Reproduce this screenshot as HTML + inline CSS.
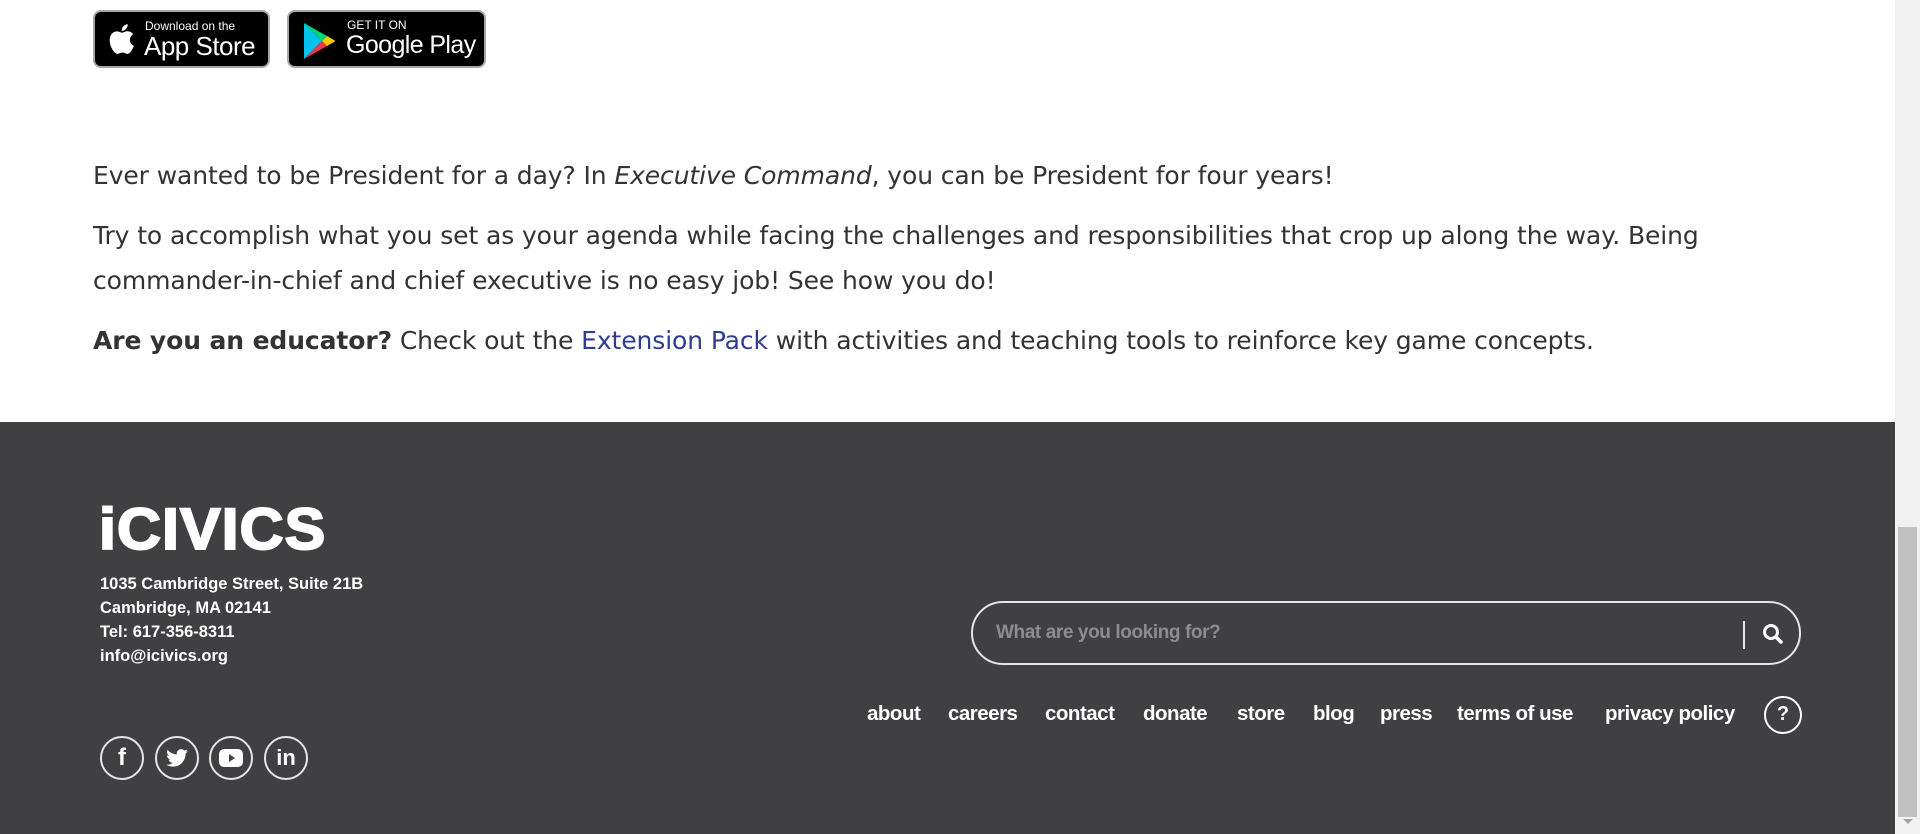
<!DOCTYPE html>
<html><head><meta charset="utf-8"><style>
*{margin:0;padding:0;box-sizing:border-box}
body{width:1920px;height:834px;overflow:hidden;background:#fff;position:relative;font-family:"DejaVu Sans","Liberation Sans",sans-serif}
.badge{position:absolute;top:10px;height:58px;background:#000;border:2px solid #a6a6a6;border-radius:8px;color:#fff;font-family:"Liberation Sans",sans-serif}
.txt{position:absolute;left:93px;width:1690px;color:#333;font-size:25px;line-height:45px;letter-spacing:-0.1px}
.txt p{margin-bottom:15px}
footer{position:absolute;left:0;top:422px;width:1895px;height:412px;background:#404042;color:#fff}
.addr{position:absolute;left:100px;top:572px;font:bold 16.5px/24px "Liberation Sans",sans-serif;color:#fff}
.soc{position:absolute;top:736px;width:44px;height:44px;border:2.5px solid #e6e6e6;border-radius:50%;display:flex;align-items:center;justify-content:center;color:#fff;font:bold 24px "Liberation Sans",sans-serif}
.search{position:absolute;left:971px;top:601px;width:830px;height:64px;border:2.5px solid #e6e6e6;border-radius:32px}
.nav{position:absolute;top:700px;font:bold 20.5px/28px "Liberation Sans",sans-serif;color:#fff;letter-spacing:-0.5px}
.sb{position:absolute;right:0;top:0;width:25px;height:834px;background:#f1f1f1}
</style></head><body>
<div class="badge" style="left:93px;width:177px">
<svg style="position:absolute;left:12px;top:10px" width="28" height="34" viewBox="0 0 24 29"><path fill="#fff" d="M19.6 15.4c0-3.3 2.7-4.9 2.8-5-1.5-2.2-3.9-2.5-4.7-2.5-2-.2-3.9 1.2-4.9 1.2s-2.6-1.2-4.2-1.1C6.400 8 4.400 9.200 3.400 11.100c-2.300 3.900-.6 9.700 1.600 12.900 1.100 1.600 2.400 3.300 4 3.200 1.600-.1 2.200-1 4.200-1s2.500 1 4.200 1c1.700 0 2.800-1.600 3.900-3.200 1.200-1.800 1.700-3.500 1.700-3.600 0 0-3.300-1.300-3.400-5zM16.400 5.800c.9-1.100 1.500-2.600 1.300-4.100-1.300.1-2.800.9-3.700 1.900-.8.900-1.500 2.400-1.300 3.900 1.400.1 2.800-.7 3.700-1.700z"/></svg>
<div style="position:absolute;left:50px;top:7px;font-size:12px">Download on the</div>
<div style="position:absolute;left:49px;top:19px;font-size:26px;letter-spacing:-0.5px">App Store</div>
</div>
<div class="badge" style="left:287px;width:199px">
<svg style="position:absolute;left:13px;top:10px" width="34" height="38" viewBox="0 0 34 38"><path d="M2 1l18 18L2 37z" fill="#00c3f0"/><path d="M2 1l23 13-5 5z" fill="#00d66f"/><path d="M2 37l23-13-5-5z" fill="#f0364a"/><path d="M25 14l7 4c1.500 1 1.500 1 0 2l-7 4-5-5z" fill="#ffc900"/></svg>
<div style="position:absolute;left:58px;top:6px;font-size:12px">GET IT ON</div>
<div style="position:absolute;left:57px;top:19px;font-size:25px;letter-spacing:-0.6px">Google Play</div>
</div>
<div class="txt" style="top:153px">
<p>Ever wanted to be President for a day? In <i>Executive Command</i>, you can be President for four years!</p>
<p>Try to accomplish what you set as your agenda while facing the challenges and responsibilities that crop up along the way. Being commander-in-chief and chief executive is no easy job! See how you do!</p>
<p><b>Are you an educator?</b> Check out the <span style="color:#2e3d8f">Extension Pack</span> with activities and teaching tools to reinforce key game concepts.</p>
</div>
<footer></footer>
<div style="position:absolute;left:99px;top:497px;font:900 58px/66px 'Liberation Sans',sans-serif;color:#fff;letter-spacing:1px;-webkit-text-stroke:2px #fff;transform:scaleX(1.05);transform-origin:left">iCIVICS</div>
<div class="addr">1035 Cambridge Street, Suite 21B<br>Cambridge, MA 02141<br>Tel: 617-356-8311<br>info@icivics.org</div>
<div class="soc" style="left:100px">f</div>
<div class="soc" style="left:155px"><svg width="22" height="18" viewBox="0 0 24 20"><path fill="#fff" d="M24 2.400c-.9.4-1.800.6-2.800.8 1-.6 1.800-1.600 2.200-2.700-1 .6-2 1-3.100 1.200C19.300.7 18 .1 16.600.1c-2.700 0-4.900 2.200-4.900 4.900 0 .4 0 .8.1 1.100C7.700 5.900 4.100 4 1.700 1 1.200 1.700 1 2.600 1 3.500c0 1.700.9 3.200 2.200 4.100-.8 0-1.600-.2-2.200-.6v.1c0 2.400 1.700 4.400 3.900 4.800-.4.100-.8.200-1.300.2-.3 0-.6 0-.9-.1.6 2 2.400 3.400 4.600 3.400-1.700 1.300-3.800 2.100-6.100 2.100-.4 0-.8 0-1.200-.1 2.200 1.400 4.800 2.200 7.500 2.200 9.100 0 14-7.500 14-14v-.6c1-.7 1.800-1.600 2.500-2.600z"/></svg></div>
<div class="soc" style="left:209px"><svg width="24" height="18" viewBox="0 0 24 18"><rect width="24" height="18" rx="5" fill="#fff"/><path d="M10 5l6 4-6 4z" fill="#404042"/></svg></div>
<div class="soc" style="left:264px;font-size:22px">in</div>
<div class="search">
<div style="position:absolute;left:23px;top:16px;font:bold 19px/28px 'Liberation Sans',sans-serif;color:#8d8d8f;letter-spacing:-0.4px">What are you looking for?</div>
<div style="position:absolute;left:770px;top:18px;width:2px;height:28px;background:#e6e6e6"></div>
<svg style="position:absolute;left:788px;top:19px" width="24" height="24" viewBox="0 0 24 24"><circle cx="10" cy="10" r="6.5" stroke="#fff" stroke-width="3" fill="none"/><path d="M15 15l5 5" stroke="#fff" stroke-width="3.500" stroke-linecap="round"/></svg>
</div>
<div class="nav" style="left:867px">about</div>
<div class="nav" style="left:948px">careers</div>
<div class="nav" style="left:1045px">contact</div>
<div class="nav" style="left:1143px">donate</div>
<div class="nav" style="left:1237px">store</div>
<div class="nav" style="left:1313px">blog</div>
<div class="nav" style="left:1380px">press</div>
<div class="nav" style="left:1457px">terms of use</div>
<div class="nav" style="left:1605px">privacy policy</div>
<div style="position:absolute;left:1764px;top:696px;width:38px;height:38px;border:2.5px solid #fff;border-radius:50%;color:#fff;font:bold 20px/33px 'Liberation Sans',sans-serif;text-align:center">?</div>
<div class="sb"><div style="position:absolute;left:3px;top:527px;width:19px;height:290px;background:#c1c1c1"></div>
<div style="position:absolute;left:8px;top:819px;border:5px solid transparent;border-top:5px solid #a3a3a3"></div></div>
</body></html>
